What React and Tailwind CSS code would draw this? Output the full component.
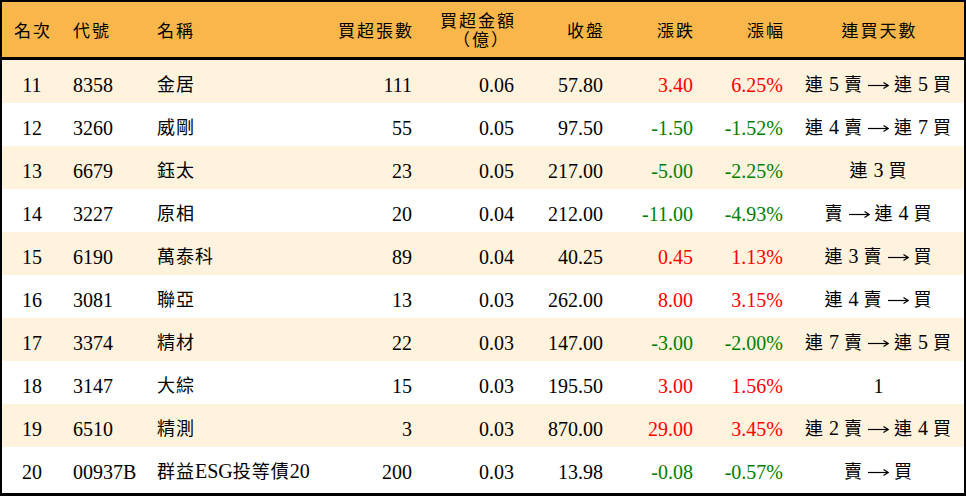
import React from "react";

const rows = [
  ["11", "8358", "金居", "111", "0.06", "57.80", "3.40", "6.25%", "連 5 賣 → 連 5 買", "up"],
  ["12", "3260", "威剛", "55", "0.05", "97.50", "-1.50", "-1.52%", "連 4 賣 → 連 7 買", "down"],
  ["13", "6679", "鈺太", "23", "0.05", "217.00", "-5.00", "-2.25%", "連 3 買", "down"],
  ["14", "3227", "原相", "20", "0.04", "212.00", "-11.00", "-4.93%", "賣 → 連 4 買", "down"],
  ["15", "6190", "萬泰科", "89", "0.04", "40.25", "0.45", "1.13%", "連 3 賣 → 買", "up"],
  ["16", "3081", "聯亞", "13", "0.03", "262.00", "8.00", "3.15%", "連 4 賣 → 買", "up"],
  ["17", "3374", "精材", "22", "0.03", "147.00", "-3.00", "-2.00%", "連 7 賣 → 連 5 買", "down"],
  ["18", "3147", "大綜", "15", "0.03", "195.50", "3.00", "1.56%", "1", "up"],
  ["19", "6510", "精測", "3", "0.03", "870.00", "29.00", "3.45%", "連 2 賣 → 連 4 買", "up"],
  ["20", "00937B", "群益ESG投等債20", "200", "0.03", "13.98", "-0.08", "-0.57%", "賣 → 買", "down"],
];

function Arrow() {
  return (
    <svg width="21" height="10" viewBox="0 0 21 10" className="inline-block align-middle mb-[3px]">
      <path d="M0 5.5H20" stroke="#000" strokeWidth="1.2" fill="none" />
      <path d="M15.5 2.5L20.2 5.5L15.5 8.5" stroke="#000" strokeWidth="1.2" fill="none" />
    </svg>
  );
}

function Mixed({ text }) {
  const parts = text.split(/([\u3400-\u9fff\uff00-\uffef]+|→)/).filter((p) => p !== "");
  return (
    <>
      {parts.map((p, i) =>
        p === "→" ? (
          <Arrow key={i} />
        ) : /[\u3400-\u9fff\uff00-\uffef]/.test(p) ? (
          <span key={i} className="text-[18px] tracking-[1px]">
            {p}
          </span>
        ) : (
          <span key={i}>{p}</span>
        )
      )}
    </>
  );
}

const grid =
  "grid grid-cols-[60px_85px_183px_92px_102px_89px_90px_90px_171px] items-center";

export default function App() {
  return (
    <div className="w-[966px] h-[496px] border-2 border-b-[3px] border-black bg-white overflow-hidden font-['Liberation_Serif','Noto_Sans_CJK_TC',serif] text-black">
      <div className={`${grid} h-[58px] pt-[4px] bg-[#F9B74B] border-b-[3px] border-black text-[17px] tracking-[2px] leading-[18px]`}>
        <div className="text-center pl-[2px]">名次</div>
        <div className="pl-[11px]">代號</div>
        <div className="pl-[10px]">名稱</div>
        <div className="text-right pr-[8px]">買超張數</div>
        <div className="text-right pr-[8px] flex flex-col items-end">
          <span>買超金額</span>
          <span className="pr-[6px] mt-[1px]">（億）</span>
        </div>
        <div className="text-right pr-[8px]">收盤</div>
        <div className="text-right pr-[8px]">漲跌</div>
        <div className="text-right pr-[8px]">漲幅</div>
        <div className="text-center pl-[2px]">連買天數</div>
      </div>
      {rows.map((r, idx) => {
        const color = r[9] === "up" ? "text-[#FF0000]" : "text-[#008000]";
        return (
          <div
            key={r[0]}
            className={`${grid} h-[43px] pt-[6px] text-[20px] leading-[24px] ${idx % 2 === 0 ? "bg-[#FFF3DD]" : "bg-white"}`}
          >
            <div className="text-center">{r[0]}</div>
            <div className="pl-[11px]">{r[1]}</div>
            <div className="pl-[10px] whitespace-nowrap">
              <Mixed text={r[2]} />
            </div>
            <div className="text-right pr-[10px]">{r[3]}</div>
            <div className="text-right pr-[10px]">{r[4]}</div>
            <div className="text-right pr-[10px]">{r[5]}</div>
            <div className={`text-right pr-[10px] ${color}`}>{r[6]}</div>
            <div className={`text-right pr-[10px] ${color}`}>{r[7]}</div>
            <div className="text-center whitespace-nowrap">
              <Mixed text={r[8]} />
            </div>
          </div>
        );
      })}
    </div>
  );
}
